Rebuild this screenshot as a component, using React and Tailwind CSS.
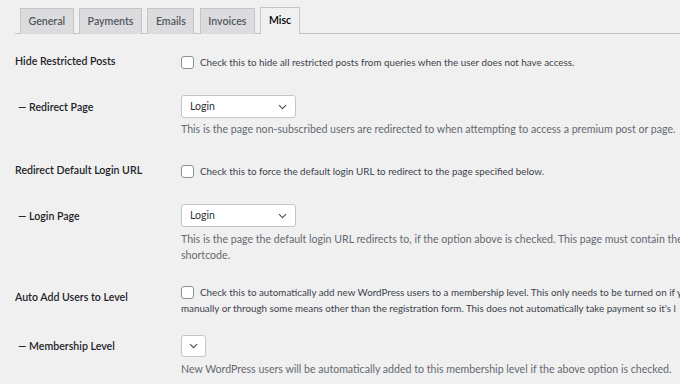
import React from "react";

const font = { fontFamily: 'Lato, "Noto Sans", sans-serif' };

function Chevron() {
  return (
    <svg width="9" height="6" viewBox="0 0 9 6" fill="none">
      <path d="M1 1.2l3.5 3.5 3.5-3.5" stroke="#50575e" strokeWidth="1.2" />
    </svg>
  );
}

function Select({ value, wide = true }) {
  return (
    <div
      className={`flex items-center bg-white border border-[#c3c4c7] rounded-[3px] ${
        wide ? "w-[115px] h-[23px] pl-[8px] pr-[8px] justify-between" : "w-[25px] h-[22px] justify-center"
      }`}
    >
      {value && <span className="text-[10.6px] text-[#2c3338]">{value}</span>}
      <Chevron />
    </div>
  );
}

function Checkbox() {
  return <div className="w-[13px] h-[13px] shrink-0 bg-white border border-[#8c8f94] rounded-[3px]" />;
}

function Label({ children, className = "" }) {
  return (
    <div className={`w-[181px] shrink-0 pl-[15px] text-[10.6px] font-semibold text-[#1d2327] whitespace-nowrap ${className}`}>
      {children}
    </div>
  );
}

export default function App() {
  const tabs = ["General", "Payments", "Emails", "Invoices"];
  return (
    <div className="w-[680px] h-[384px] overflow-hidden bg-[#f0f0f1]" style={font}>
      <div className="flex items-end gap-[5.5px] pl-[5px] pt-[7px] border-b border-[#c3c4c7] ml-[15px]">
        {tabs.map((t) => (
          <div
            key={t}
            className="h-[26px] px-[7.5px] flex items-center bg-[#dcdcde] border border-b-0 border-[#c3c4c7] text-[10.6px] font-semibold text-[#50575e] -mb-px"
          >
            {t}
          </div>
        ))}
        <div className="h-[27px] px-[7.5px] flex items-center bg-[#f0f0f1] border border-b-0 border-[#c3c4c7] text-[10.6px] font-semibold text-[#000] -mb-px pb-px">
          Misc
        </div>
      </div>

      {/* Row 1 */}
      <div className="flex mt-[20px] h-[16px] items-center">
        <Label>Hide Restricted Posts</Label>
        <div className="flex items-center gap-[6px] text-[9.8px] text-[#3c434a] whitespace-nowrap">
          <Checkbox />
          <span>Check this to hide all restricted posts from queries when the user does not have access.</span>
        </div>
      </div>

      {/* Row 2 */}
      <div className="flex mt-[25px]">
        <Label className="h-[23px] flex items-center pt-[2px] pl-[18px]">— Redirect Page</Label>
        <div className="flex flex-col">
          <Select value="Login" />
          <div className="mt-[3px] leading-[16px] text-[10.6px] text-[#646970] whitespace-nowrap">
            This is the page non-subscribed users are redirected to when attempting to access a premium post or page.
          </div>
        </div>
      </div>

      {/* Row 3 */}
      <div className="flex mt-[26px] h-[16px] items-center">
        <Label>Redirect Default Login URL</Label>
        <div className="flex items-center gap-[6px] text-[9.8px] text-[#3c434a] whitespace-nowrap">
          <Checkbox />
          <span>Check this to force the default login URL to redirect to the page specified below.</span>
        </div>
      </div>

      {/* Row 4 */}
      <div className="flex mt-[25px]">
        <Label className="h-[23px] flex items-center pt-[2px] pl-[18px]">— Login Page</Label>
        <div className="flex flex-col">
          <Select value="Login" />
          <div className="mt-[4px] leading-[16px] text-[10.6px] text-[#646970] whitespace-nowrap">
            <div>This is the page the default login URL redirects to, if the option above is checked. This page must contain the</div>
            <div>shortcode.</div>
          </div>
        </div>
      </div>

      {/* Row 5 */}
      <div className="flex mt-[21px]">
        <Label className="mt-[5px] leading-[16px]">Auto Add Users to Level</Label>
        <div className="flex flex-col leading-[16px] text-[9.8px] text-[#3c434a] whitespace-nowrap">
          <div className="flex items-center gap-[6px]">
            <Checkbox />
            <span>Check this to automatically add new WordPress users to a membership level. This only needs to be turned on if y</span>
          </div>
          <div>manually or through some means other than the registration form. This does not automatically take payment so it's l</div>
        </div>
      </div>

      {/* Row 6 */}
      <div className="flex mt-[19px]">
        <Label className="h-[22px] flex items-center pt-[2px] pl-[18px]">— Membership Level</Label>
        <div className="flex flex-col">
          <Select wide={false} />
          <div className="mt-[4px] leading-[16px] text-[10.6px] text-[#646970] whitespace-nowrap">
            New WordPress users will be automatically added to this membership level if the above option is checked.
          </div>
        </div>
      </div>
    </div>
  );
}
